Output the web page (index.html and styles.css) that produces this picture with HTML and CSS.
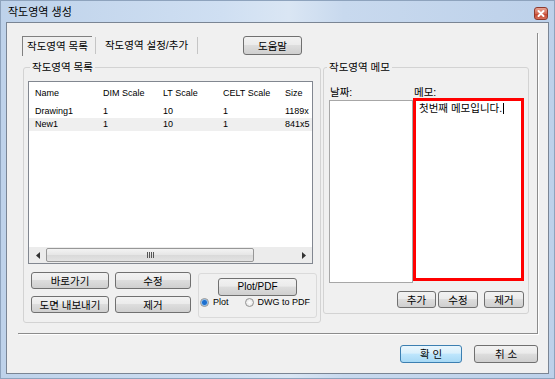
FILE: index.html
```html
<!DOCTYPE html>
<html lang="ko">
<head>
  <meta charset="UTF-8">
  <title>작도영역 생성</title>
  <link rel="stylesheet" href="styles.css">
</head>
<body>
  <div class="window">
    <div class="titlebar">
      <span class="title">작도영역 생성</span>
      <span class="close">
        <svg width="14" height="13" viewBox="0 0 14 13">
          <path d="M4.5 4 L9.5 9 M9.5 4 L4.5 9" stroke="#fff" stroke-width="2" stroke-linecap="round"/>
        </svg>
      </span>
    </div>
    <div class="client">
      <div class="tabctl">
        <div class="tabs">
          <span class="tab tab-main">작도영역 목록</span>
          <span class="tab-sep"></span>
          <span class="tab tab-set">작도영역 설정/추가</span>
          <span class="tab-sep"></span>
          <button class="btn btn-help">도움말</button>
        </div>
        <div class="pages">
          <fieldset class="group group-list">
            <legend>작도영역 목록</legend>
            <div class="listview">
              <div class="lv-row lv-head"><span>Name</span><span>DIM Scale</span><span>LT Scale</span><span>CELT Scale</span><span>Size</span></div>
              <div class="lv-row"><span>Drawing1</span><span>1</span><span>10</span><span>1</span><span>1189x</span></div>
              <div class="lv-row sel"><span>New1</span><span>1</span><span>10</span><span>1</span><span>841x5</span></div>
              <div class="hscroll">
                <span class="arrow">
                  <svg width="4" height="7" viewBox="0 0 4 7"><path d="M4 0 L0 3.5 L4 7 Z" fill="#333"/></svg>
                </span>
                <span class="thumb"><span class="grip"></span></span>
                <span class="track"></span>
                <span class="arrow">
                  <svg width="4" height="7" viewBox="0 0 4 7"><path d="M0 0 L4 3.5 L0 7 Z" fill="#333"/></svg>
                </span>
              </div>
            </div>
            <div class="actions">
              <div class="btn-grid">
                <button class="btn">바로가기</button>
                <button class="btn">수정</button>
                <button class="btn">도면 내보내기</button>
                <button class="btn">제거</button>
              </div>
              <div class="plot-box">
                <button class="btn btn-plot">Plot/PDF</button>
                <div class="radios">
                  <label class="radio"><span class="dot checked"></span>Plot</label>
                  <label class="radio"><span class="dot"></span>DWG to PDF</label>
                </div>
              </div>
            </div>
          </fieldset>
          <fieldset class="group group-memo">
            <legend>작도영역 메모</legend>
            <div class="memo-cols">
              <div class="date-col">
                <p class="field-label">날짜:</p>
                <div class="date-box"></div>
              </div>
              <div class="memo-col">
                <p class="field-label">메모:</p>
                <div class="memo-box">첫번째 메모입니다.<span class="caret"></span></div>
              </div>
            </div>
            <div class="memo-btns">
              <button class="btn btn-add">추가</button>
              <button class="btn btn-edit">수정</button>
              <button class="btn btn-del">제거</button>
            </div>
          </fieldset>
        </div>
      </div>
      <div class="dlg-btns">
        <button class="btn btn-ok">확 인</button>
        <button class="btn btn-cancel">취 소</button>
      </div>
    </div>
  </div>
</body>
</html>
```

FILE: styles.css
```css
* {
  margin: 0;
  padding: 0;
  box-sizing: border-box;
}
body {
  font-family: "Liberation Sans", "Noto Sans CJK KR", sans-serif;
  font-size: 10.5px;
  color: #000;
}
.window {
  width: 555px;
  height: 379px;
  border: 1px solid #8ea3bd;
  background: linear-gradient(90deg, #bed2ea 0%, #cfdff2 40%, #dae6f4 52%, #c8d9ee 62%, #bdd1ea 100%);
  padding: 0 5px 4px 5px;
  display: flex;
  flex-direction: column;
}
.titlebar {
  height: 21px;
  display: flex;
  align-items: center;
  justify-content: space-between;
  padding: 0 1px 0 2px;
}
.title {
  font-size: 11px;
  line-height: 14px;
}
.close {
  width: 14px;
  height: 13px;
  margin-top: 3px;
  border: 1px solid #8d3a2e;
  border-radius: 3px;
  background: linear-gradient(#e8a493, #d46a55 50%, #c2402a 51%, #d6705a);
  display: flex;
}
.close svg {
  margin: -1px;
}
.client {
  flex: 1;
  background: #f0f0f0;
  border: 1px solid #7a8594;
  padding: 10px 0 0 11px;
}

/* tab control */
.tabctl {
  width: 520px;
  height: 301px;
  border-right: 1px solid #8c8c8c;
  border-bottom: 1px solid #8c8c8c;
  box-shadow: 1px 1px 0 #fff;
  display: flex;
  flex-direction: column;
}
.tabs {
  display: flex;
  align-items: center;
  height: 23px;
  padding: 2px 0 0 4px;
}
.tab {
  height: 20px;
  line-height: 19px;
  text-align: center;
}
.tab-main {
  width: 70px;
  border-left: 1px solid #808080;
  border-top: 1px solid #808080;
}
.tab-set {
  width: 95px;
}
.tab-sep {
  width: 1px;
  height: 17px;
  background: #c5c5c5;
  margin: 0 3px;
}
.btn-help {
  width: 59px;
  height: 19px !important;
  margin-left: 42px;
}
.pages {
  display: flex;
  align-items: flex-start;
  gap: 2px;
  padding-left: 5px;
  margin-top: 5px;
}
fieldset.group {
  border: 1px solid #d3d3d3;
  border-radius: 3px;
  min-width: 0;
}
legend {
  line-height: 12px;
  padding: 0 2px;
  margin-left: 2px;
}
.group-memo legend {
  margin-left: -2px;
}
.group-list {
  width: 298px;
  height: 262px;
  padding: 8px 0 0 4px;
}
.group-memo {
  width: 206px;
  height: 253px;
  padding: 0 4px 0 5px;
}

/* list view */
.listview {
  width: 285px;
  height: 183px;
  border: 1px solid #828790;
  background: #fff;
  display: flex;
  flex-direction: column;
  font-size: 9px;
}
.lv-row {
  display: grid;
  grid-template-columns: 68px 60px 60px 62px 28px;
  padding-left: 6px;
  height: 13px;
  line-height: 13px;
  white-space: nowrap;
  overflow: hidden;
}
.lv-head {
  height: 23px;
  line-height: 23px;
}
.lv-row.sel {
  background: #efefef;
}
.hscroll {
  margin-top: auto;
  height: 16px;
  background: #ececec;
  display: flex;
  align-items: center;
}
.arrow {
  width: 17px;
  height: 15px;
  display: flex;
  align-items: center;
  justify-content: center;
}
.thumb {
  width: 208px;
  height: 14px;
  border: 1px solid #979797;
  border-radius: 2px;
  background: linear-gradient(#f3f3f3, #e6e6e6 50%, #d9d9d9 51%, #e3e3e3);
  display: flex;
  align-items: center;
  justify-content: center;
}
.grip {
  width: 7px;
  height: 6px;
  background: repeating-linear-gradient(90deg, #555 0 1px, transparent 1px 2px);
}
.track {
  flex: 1;
}

/* buttons */
.btn {
  font: inherit;
  height: 17px;
  border: 1px solid #707070;
  border-radius: 3px;
  background: linear-gradient(#f2f2f2, #ebebeb 45%, #dddddd 50%, #cfcfcf);
  color: #000;
  line-height: 14px;
  padding: 0;
}
.actions {
  display: flex;
  align-items: flex-start;
  margin-top: 8px;
}
.btn-grid {
  display: grid;
  grid-template-columns: 78px 76px;
  column-gap: 6px;
  row-gap: 7px;
  margin-left: 3px;
}
.plot-box {
  width: 119px;
  height: 45px;
  margin: 1px 0 0 7px;
  border: 1px solid #dadada;
  border-radius: 3px;
  display: flex;
  flex-direction: column;
  align-items: center;
  padding-top: 4px;
}
.btn-plot {
  width: 79px;
  height: 18px;
  font-size: 10px;
}
.radios {
  align-self: stretch;
  display: flex;
  gap: 16px;
  padding-left: 1px;
  margin-top: 1px;
  font-size: 9px;
  line-height: 11px;
  white-space: nowrap;
}
.radio {
  display: flex;
  align-items: center;
  gap: 4px;
}
.dot {
  width: 9px;
  height: 9px;
  border-radius: 50%;
  border: 1px solid #929292;
  background: radial-gradient(circle, #fff, #dedede);
}
.dot.checked {
  background: radial-gradient(circle, #1d6fcf 0 2px, #8fc0ee 3px, #e6eef6 4px);
}

/* memo */
.memo-cols {
  display: flex;
  align-items: flex-start;
  margin-top: 13px;
}
.field-label {
  line-height: 12px;
  padding-left: 1px;
}
.date-col {
  width: 84px;
}
.date-box {
  height: 183px;
  margin-top: 2px;
  border: 1px solid #a7a7a7;
  background: #fff;
}
.memo-col {
  width: 111px;
}
.memo-box {
  height: 183px;
  border: 3px solid #f00;
  background: #fff;
  padding: 1px 0 0 3px;
  line-height: 12px;
  white-space: nowrap;
}
.caret {
  display: inline-block;
  width: 1px;
  height: 11px;
  background: #000;
  vertical-align: -2px;
  margin-left: 1px;
}
.memo-btns {
  display: flex;
  justify-content: flex-end;
  margin-top: 8px;
}
.btn-add {
  width: 39px;
}
.btn-edit {
  width: 40px;
  margin-left: 2px;
}
.btn-del {
  width: 40px;
  margin-left: 6px;
}

/* dialog buttons */
.dlg-btns {
  width: 520px;
  display: flex;
  justify-content: flex-end;
  gap: 12px;
  margin-top: 11px;
}
.btn-ok,
.btn-cancel {
  height: 18px;
}
.btn-ok {
  width: 62px;
  border-color: #3c7fb1;
  background: linear-gradient(#eaf6fd, #d9f0fc 45%, #bee6fd 50%, #a7d9f5);
}
.btn-cancel {
  width: 64px;
}
```
